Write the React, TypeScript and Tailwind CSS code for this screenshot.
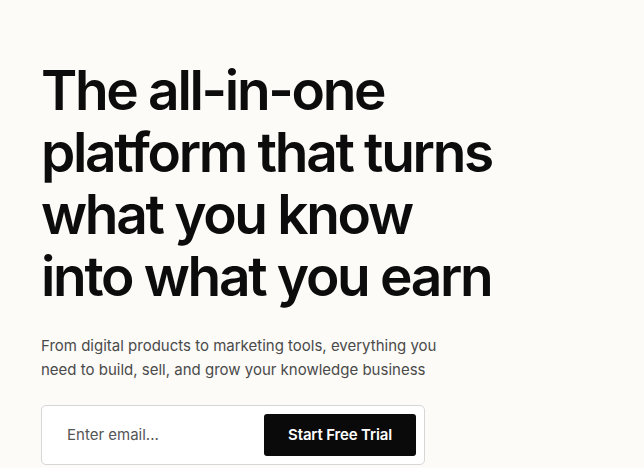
import React from "react";

export default function App() {
  return (
    <div
      className="min-h-[468px] w-full bg-[#fcfbf8] pl-[41px] pt-[59px]"
      style={{ fontFamily: "Inter, 'Noto Sans', sans-serif" }}
    >
      <h1 className="text-[55px] leading-[62px] font-semibold tracking-[-0.042em] text-[#0c0c0c]">
        The all-in-one
        <br />
        platform that turns
        <br />
        what you know
        <br />
        into what you earn
      </h1>
      <p className="mt-[27px] text-[15px] leading-[24px] text-[#4a4a4a] tracking-[0em]">
        From digital products to marketing tools, everything you
        <br />
        need to build, sell, and grow your knowledge business
      </p>
      <div className="mt-[23px] flex h-[60px] w-[384px] items-center justify-between rounded-[5px] border border-[#d6d6d6] bg-white pl-[25px] pr-[8px]">
        <span className="text-[15px] text-[#555555]">Enter email...</span>
        <button className="h-[42px] w-[152px] rounded-[3px] bg-[#0a0a0a] text-[15px] font-semibold text-white tracking-[-0.01em]">
          Start Free Trial
        </button>
      </div>
    </div>
  );
}
